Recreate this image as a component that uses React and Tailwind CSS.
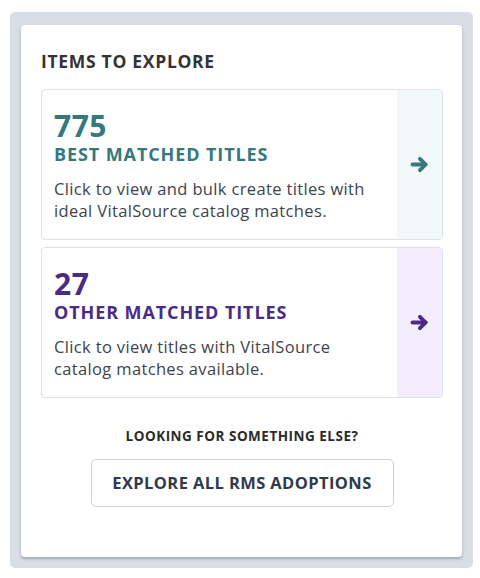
import React from 'react';

const Arrow = ({ color }) => (
  <svg width="21" height="21" viewBox="0 0 24 24" fill="none" stroke={color} strokeWidth="4.4" strokeLinecap="round" strokeLinejoin="round">
    <path d="M4 12h15" />
    <path d="M12.5 5.5l6.5 6.5-6.5 6.5" />
  </svg>
);

const ExploreCard = ({ count, title, desc, textColor, stripeBg, arrowColor }) => (
  <button className="flex w-full text-left bg-white border border-[#dfe1e8] rounded-[4px] overflow-hidden h-[151px]">
    <div className="flex-1 pl-[12px] pt-[18px]">
      <div className={`text-[30px] leading-[35px] font-bold tracking-[0.5px] ${textColor}`}>{count}</div>
      <div className={`text-[18px] leading-[22px] font-bold tracking-[0.9px] ${textColor}`}>{title}</div>
      <p className="text-[16.5px] leading-[22px] tracking-[0.35px] text-[#3d4350] mt-[13px] pr-2">{desc}</p>
    </div>
    <div className={`w-[45px] flex items-center justify-center ${stripeBg}`}>
      <Arrow color={arrowColor} />
    </div>
  </button>
);

export default function App() {
  return (
    <div className="w-[480px] h-[578px] bg-white pt-[12px] pl-[10px]" style={{ fontFamily: "'Open Sans', 'Noto Sans', sans-serif" }}>
      <div className="w-[463px] h-[556px] bg-[#d9dde5] rounded-[5px] pt-[13px] pl-[11px]">
        <div className="w-[441px] h-[532px] bg-white rounded-[4px] shadow-[0_2px_3px_rgba(60,70,90,0.35)] px-[20px] pt-[25px]">
          <h2 className="text-[17.5px] leading-[22px] font-bold tracking-[0.7px] text-[#333333]">ITEMS TO EXPLORE</h2>
          <div className="mt-[17px] flex flex-col gap-[7px] w-[402px]">
            <ExploreCard
              count="775"
              title="BEST MATCHED TITLES"
              desc="Click to view and bulk create titles with ideal VitalSource catalog matches."
              textColor="text-[#35797f]"
              stripeBg="bg-[#f0f8fa]"
              arrowColor="#35797f"
            />
            <ExploreCard
              count="27"
              title="OTHER MATCHED TITLES"
              desc="Click to view titles with VitalSource catalog matches available."
              textColor="text-[#4a2b85]"
              stripeBg="bg-[#f4eefc]"
              arrowColor="#4a2b85"
            />
          </div>
          <div className="w-[402px] flex flex-col items-center mt-[30px]">
            <div className="text-[13.5px] leading-[17px] font-bold tracking-[0.5px] text-[#2b2b2b]">LOOKING FOR SOMETHING ELSE?</div>
            <button className="mt-[14px] w-[303px] h-[48px] border border-[#cfd2d8] rounded-[5px] text-[16.5px] font-bold tracking-[0.4px] text-[#2f3a4c]">
              EXPLORE ALL RMS ADOPTIONS
            </button>
          </div>
        </div>
      </div>
    </div>
  );
}
